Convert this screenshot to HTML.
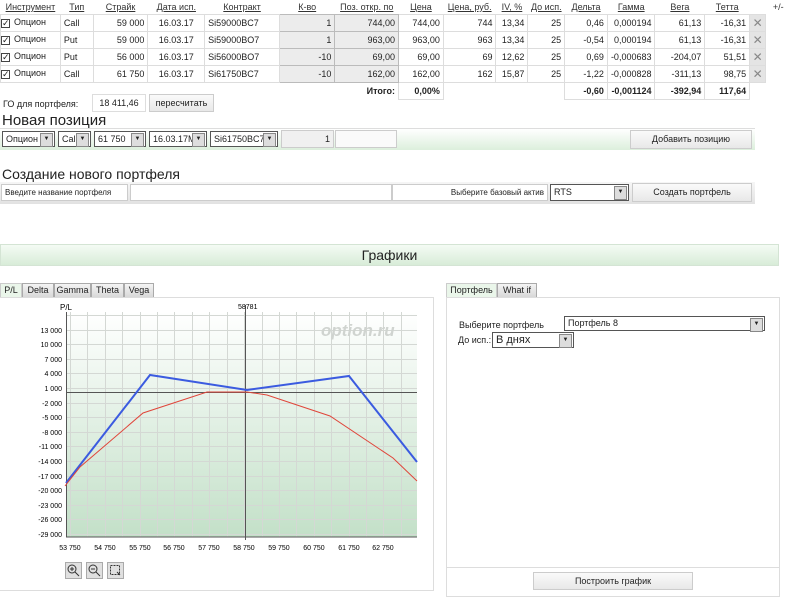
<!DOCTYPE html>
<html><head><meta charset="utf-8"><style>
*{box-sizing:border-box;margin:0;padding:0}
body{width:792px;height:600px;background:#fff;font-family:"Liberation Sans","DejaVu Sans",sans-serif;font-size:9px;color:#222;position:relative;overflow:hidden}
.a{position:absolute}
table{border-collapse:collapse;table-layout:fixed;position:absolute;left:0;top:0}
td{height:17px;border:1px solid #ddd;padding:0 3px;white-space:nowrap;overflow:hidden;text-align:right}
th{height:14px;font-weight:normal;text-decoration:underline;color:#333;border:none;text-align:center;font-size:9px}
td.l{text-align:left}
td.g{background:#ececec;border-color:#bbb}
.cb{display:inline-block;width:9px;height:9px;border:1px solid #444;vertical-align:middle;margin-right:4px;font-size:9px;line-height:7px;text-align:center}
.x{background:#e4e4e4;color:#888;text-align:center;padding:0;font-size:12px}
.sel{position:absolute;height:16px;border:1px solid #555;background:#fff;font-size:9px;padding:2px 3px}
.sel:after{content:"▼";position:absolute;right:1px;top:1px;width:11px;height:12px;background:#ddd;border:1px solid #888;font-size:6px;line-height:11px;text-align:center}
.btn{position:absolute;background:linear-gradient(#fafafa,#e8e8e8);border:1px solid #ccc;text-align:center;font-size:9px}
.tab{position:absolute;top:283px;height:15px;border:1px solid #aaa;background:linear-gradient(#f4f4f4,#d8d8d8);font-size:9px;text-align:center;line-height:13px}
</style></head><body>
<table>
<colgroup><col style="width:60px"><col style="width:33px"><col style="width:55px"><col style="width:57px"><col style="width:75px"><col style="width:56px"><col style="width:64px"><col style="width:45px"><col style="width:53px"><col style="width:32px"><col style="width:37px"><col style="width:43px"><col style="width:45px"><col style="width:50px"><col style="width:45px"><col style="width:16px"><col style="width:26px"></colgroup>
<tr><th>Инструмент</th><th>Тип</th><th>Страйк</th><th>Дата исп.</th><th>Контракт</th><th>К-во</th><th>Поз. откр. по</th><th>Цена</th><th>Цена, руб.</th><th>IV, %</th><th>До исп.</th><th>Дельта</th><th>Гамма</th><th>Вега</th><th>Тетта</th><th></th><th style="text-decoration:none">+/-</th></tr>
<tr><td class="l" style="padding:0"><span class="cb">✓</span>Опцион</td><td class="l">Call</td><td>59 000</td><td style="text-align:center">16.03.17</td><td class="l">Si59000BC7</td><td class="g">1</td><td class="g">744,00</td><td>744,00</td><td>744</td><td>13,34</td><td>25</td><td>0,46</td><td>0,000194</td><td>61,13</td><td>-16,31</td><td class="x">✕</td><td style="border:none"></td></tr>
<tr><td class="l" style="padding:0"><span class="cb">✓</span>Опцион</td><td class="l">Put</td><td>59 000</td><td style="text-align:center">16.03.17</td><td class="l">Si59000BO7</td><td class="g">1</td><td class="g">963,00</td><td>963,00</td><td>963</td><td>13,34</td><td>25</td><td>-0,54</td><td>0,000194</td><td>61,13</td><td>-16,31</td><td class="x">✕</td><td style="border:none"></td></tr>
<tr><td class="l" style="padding:0"><span class="cb">✓</span>Опцион</td><td class="l">Put</td><td>56 000</td><td style="text-align:center">16.03.17</td><td class="l">Si56000BO7</td><td class="g">-10</td><td class="g">69,00</td><td>69,00</td><td>69</td><td>12,62</td><td>25</td><td>0,69</td><td>-0,000683</td><td>-204,07</td><td>51,51</td><td class="x">✕</td><td style="border:none"></td></tr>
<tr><td class="l" style="padding:0"><span class="cb">✓</span>Опцион</td><td class="l">Call</td><td>61 750</td><td style="text-align:center">16.03.17</td><td class="l">Si61750BC7</td><td class="g">-10</td><td class="g">162,00</td><td>162,00</td><td>162</td><td>15,87</td><td>25</td><td>-1,22</td><td>-0,000828</td><td>-311,13</td><td>98,75</td><td class="x">✕</td><td style="border:none"></td></tr>
<tr style="font-weight:bold"><td colspan="7" style="border:none;height:12px">Итого:</td><td style="height:12px">0,00%</td><td colspan="3" style="border:none"></td><td>-0,60</td><td>-0,001124</td><td>-392,94</td><td>117,64</td><td style="border:none"></td><td style="border:none"></td></tr>
</table>
<div class="a" style="left:3px;top:99px">ГО для портфеля:</div>
<div class="a" style="left:92px;top:94px;width:54px;height:18px;border:1px solid #ddd;text-align:center;line-height:16px">18 411,46</div>
<div class="btn" style="left:149px;top:94px;width:65px;height:18px;line-height:16px">пересчитать</div>
<div class="a" style="left:2px;top:112px;font-size:15px">Новая позиция</div>
<div class="a" style="left:0;top:128px;width:755px;height:22px;background:linear-gradient(#fff,#dcefdc);border-top:1px solid #ddd"></div>
<div class="sel" style="left:2px;top:131px;width:53px">Опцион</div>
<div class="sel" style="left:58px;top:131px;width:33px">Call</div>
<div class="sel" style="left:94px;top:131px;width:52px">61 750</div>
<div class="sel" style="left:149px;top:131px;width:58px">16.03.17M</div>
<div class="sel" style="left:210px;top:131px;width:68px">Si61750BC7</div>
<div class="a" style="left:281px;top:130px;width:53px;height:18px;background:#f0f0f0;border:1px solid #ccc;text-align:right;padding:3px 3px">1</div>
<div class="a" style="left:335px;top:130px;width:62px;height:18px;background:#fafafa;border:1px solid #ccc"></div>
<div class="btn" style="left:630px;top:130px;width:122px;height:19px;line-height:17px">Добавить позицию</div>
<div class="a" style="left:2px;top:166px;font-size:14px">Создание нового портфеля</div>
<div class="a" style="left:0;top:182px;width:755px;height:22px;background:linear-gradient(#f6f6f6,#e2e2e2)"></div>
<div class="a" style="left:1px;top:184px;width:127px;height:17px;border:1px solid #ccc;background:#fff;font-size:8px;line-height:15px;padding-left:3px">Введите название портфеля</div>
<div class="a" style="left:130px;top:184px;width:262px;height:17px;border:1px solid #ccc;background:#fff"></div>
<div class="a" style="left:392px;top:184px;width:156px;height:17px;border:1px solid #ccc;background:#fff;font-size:8px;line-height:15px;text-align:right;padding-right:3px">Выберите базовый актив</div>
<div class="sel" style="left:550px;top:184px;width:79px;height:17px">RTS</div>
<div class="btn" style="left:632px;top:183px;width:120px;height:19px;line-height:17px">Создать портфель</div>
<div class="a" style="left:0;top:244px;width:779px;height:22px;background:linear-gradient(#f4fbf4,#d8ecd8);border:1px solid #d4e4d4;text-align:center;font-size:14px;line-height:20px">Графики</div>
<div class="tab" style="left:0;width:22px;background:#eaf6ea;border-color:#ccc">P/L</div>
<div class="tab" style="left:22px;width:32px">Delta</div>
<div class="tab" style="left:54px;width:37px">Gamma</div>
<div class="tab" style="left:91px;width:33px">Theta</div>
<div class="tab" style="left:124px;width:30px">Vega</div>
<div class="a" style="left:0;top:297px;width:434px;height:294px;border:1px solid #ddd;border-left:none"></div>
<svg class="a" style="left:0;top:298px" width="432" height="292">
<defs><linearGradient id="g" x1="0" y1="0" x2="0" y2="1"><stop offset="0" stop-color="#fff"/><stop offset="1" stop-color="#c3e0c8"/></linearGradient></defs>
<g transform="translate(0,-298)">
<rect x="66" y="312" width="351" height="225" fill="url(#g)"/>
<g stroke="#d4d8d4" stroke-width="1">
<path d="M70.5 312V537M87.5 312V537M105.5 312V537M122.5 312V537M140.5 312V537M157.5 312V537M174.5 312V537M192.5 312V537M209.5 312V537M227.5 312V537M244.5 312V537M262.5 312V537M279.5 312V537M296.5 312V537M314.5 312V537M331.5 312V537M349.5 312V537M366.5 312V537M383.5 312V537M401.5 312V537"/>
<path d="M66 315.5H417M66 330.5H417M66 344.5H417M66 359.5H417M66 373.5H417M66 388.5H417M66 403.5H417M66 417.5H417M66 432.5H417M66 446.5H417M66 461.5H417M66 476.5H417M66 490.5H417M66 505.5H417M66 519.5H417M66 534.5H417"/>
</g>
<path d="M66.5 312V537H417M66 392.5H417M245.5 305V540" stroke="#555" fill="none"/>
<path d="M66 483L150 375L247 390L349 376L417 462" stroke="#3b5be0" stroke-width="2" fill="none"/>
<path d="M65 486L80 467L143 413L207 392L247 392L267 395L330 416L393 458L417 481" stroke="#e0453a" stroke-width="1" fill="none"/>
<text x="321" y="336" font-size="17" font-style="italic" font-weight="bold" fill="#d0d4d0" font-family="Liberation Sans">option.ru</text>
<text x="60" y="310" font-size="8" font-family="Liberation Sans">P/L</text>
<text x="238" y="309" font-size="7" font-family="Liberation Sans">58781</text>
<g font-size="7" font-family="Liberation Sans" text-anchor="end">
<text x="62" y="333">13 000</text><text x="62" y="347">10 000</text><text x="62" y="362">7 000</text><text x="62" y="376">4 000</text><text x="62" y="391">1 000</text><text x="62" y="406">-2 000</text><text x="62" y="420">-5 000</text><text x="62" y="435">-8 000</text><text x="62" y="449">-11 000</text><text x="62" y="464">-14 000</text><text x="62" y="479">-17 000</text><text x="62" y="493">-20 000</text><text x="62" y="508">-23 000</text><text x="62" y="522">-26 000</text><text x="62" y="537">-29 000</text>
</g>
<g font-size="7" font-family="Liberation Sans" text-anchor="middle">
<text x="70" y="550">53 750</text><text x="105" y="550">54 750</text><text x="140" y="550">55 750</text><text x="174" y="550">56 750</text><text x="209" y="550">57 750</text><text x="244" y="550">58 750</text><text x="279" y="550">59 750</text><text x="314" y="550">60 750</text><text x="349" y="550">61 750</text><text x="383" y="550">62 750</text>
</g>
<g fill="#e0e0e0" stroke="#aaa"><rect x="65.5" y="562.5" width="16" height="16"/><rect x="86.5" y="562.5" width="16" height="16"/><rect x="107.5" y="562.5" width="16" height="16"/></g>
<g stroke="#333" fill="none"><circle cx="72" cy="569" r="4"/><path d="M75 572l4 4M70 569h4M72 567v4"/><circle cx="93" cy="569" r="4"/><path d="M96 572l4 4M91 569h4"/><rect x="110.5" y="565.5" width="9" height="9" stroke-dasharray="2 1"/><path d="M117 572l3 3"/></g>
</g></svg>
<div class="tab" style="left:446px;width:51px;background:#eaf6ea;border-color:#ccc">Портфель</div>
<div class="tab" style="left:497px;width:40px">What if</div>
<div class="a" style="left:446px;top:297px;width:334px;height:300px;border:1px solid #ddd"></div>
<div class="a" style="left:446px;top:567px;width:334px;height:1px;background:#ddd"></div>
<div class="a" style="left:459px;top:320px">Выберите портфель</div>
<div class="sel" style="left:564px;top:316px;width:201px;height:15px;padding-top:1px">Портфель 8</div>
<div class="a" style="left:458px;top:335px">До исп.:</div>
<div class="sel" style="left:492px;top:332px;width:82px;font-size:11px;padding:1px 3px">В днях</div>
<div class="btn" style="left:533px;top:572px;width:160px;height:18px;line-height:16px">Построить график</div>
</body></html>
